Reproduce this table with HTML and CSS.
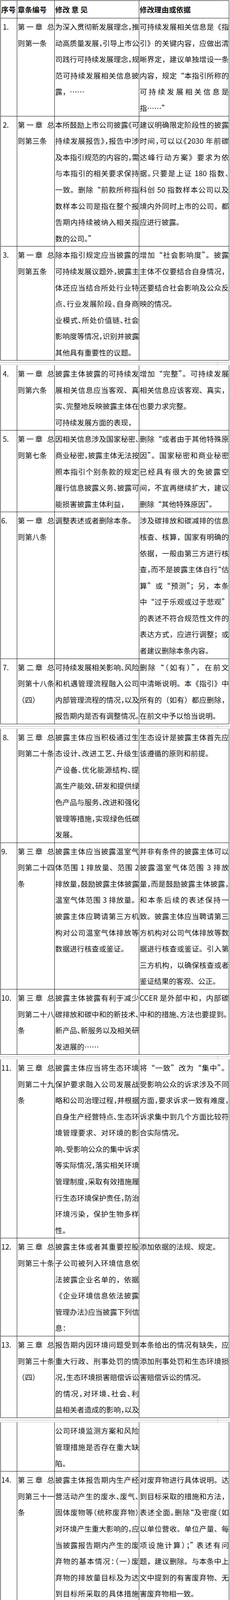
FILE: index.html
```html
<!DOCTYPE html>
<html lang="zh-CN">
<head>
<meta charset="utf-8">
<title>修改意见</title>
<link rel="stylesheet" href="styles.css">
</head>
<body>
<div class="topmark"></div>

<div class="page first">
  <div class="row head">
    <div class="cell c1"><span class="l">序号</span></div>
    <div class="cell c2"><span class="l">章条编号</span></div>
    <div class="cell c3"><span class="l">修改 意 见</span></div>
    <div class="cell c4"><span class="l">修改理由或依据</span></div>
  </div>

  <div class="row">
    <div class="cell c1"><span class="l">1.</span></div>
    <div class="cell c2"><span class="l">第一章 总</span><span class="l">则第一条</span></div>
    <div class="cell c3"><span class="l h">为深入贯彻新发展理念，推</span><span class="l h">动高质量发展，引导上市公</span><span class="l h">司践行可持续发展理念，规</span><span class="l">范可持续发展相关信息披</span><span class="l">露，……</span></div>
    <div class="cell c4"><span class="l">可持续发展相关信息是《指</span><span class="l">引》的关键内容，应做出清</span><span class="l">晰界定，建议单独增设一条</span><span class="l">内容，规定“本指引所称的</span><span class="l">可持续发展相关信息是</span><span class="l">指……”</span></div>
  </div>

  <div class="row">
    <div class="cell c1"><span class="l">2.</span></div>
    <div class="cell c2"><span class="l">第一章 总</span><span class="l">则第三条</span></div>
    <div class="cell c3"><span class="l h">本所鼓励上市公司披露《可</span><span class="l h">持续发展报告》，报告中涉</span><span class="l h">及本指引规范的内容的，需</span><span class="l">与本指引的相关要求保持</span><span class="l">一致。删除“前款所称指</span><span class="l">数样本公司是指在整个报</span><span class="l">告期内持续被纳入相关指</span><span class="l">数的公司。”</span></div>
    <div class="cell c4"><span class="l">建议明确限定阶段性的披露</span><span class="l h">时间，可以以《2030 年前碳</span><span class="l">达峰行动方案》要求为依</span><span class="l h">据。只要是上证 180 指数、</span><span class="l">科创 50 指数样本公司以及</span><span class="l">境内外同时上市的公司，都</span><span class="l">应进行披露。</span></div>
  </div>

  <div class="row">
    <div class="cell c1"><span class="l">3.</span></div>
    <div class="cell c2"><span class="l">第一章 总</span><span class="l">则第五条</span></div>
    <div class="cell c3"><span class="l">除本指引规定应当披露的</span><span class="l h">可持续发展议题外，披露主</span><span class="l">体还应当结合所处行业特</span><span class="l h">点、行业发展阶段、自身商</span><span class="l h">业模式、所处价值链、社会</span><span class="l h">影响度等情况，识别并披露</span><span class="l">其他具有重要性的议题。</span></div>
    <div class="cell c4"><span class="l">增加“社会影响度”。披露</span><span class="l">主体不仅要结合自身情况，</span><span class="l">还要结合社会影响及公众反</span><span class="l">映的情况。</span></div>
  </div>
</div>

<div class="brk"></div>

<div class="page">
  <div class="row">
    <div class="cell c1"><span class="l">4.</span></div>
    <div class="cell c2"><span class="l">第一章 总</span><span class="l">则第六条</span></div>
    <div class="cell c3"><span class="l">披露主体披露的可持续发</span><span class="l">展相关信息应当客观、真</span><span class="l h">实、完整地反映披露主体在</span><span class="l">可持续发展方面的表现，</span></div>
    <div class="cell c4"><span class="l">增加“完整”。可持续发展</span><span class="l">相关信息应该客观、真实，</span><span class="l">也要力求完整。</span></div>
  </div>

  <div class="row">
    <div class="cell c1"><span class="l">5.</span></div>
    <div class="cell c2"><span class="l">第一章 总</span><span class="l">则第七条</span></div>
    <div class="cell c3"><span class="l h">因相关信息涉及国家秘密、</span><span class="l h">商业秘密，披露主体无法按</span><span class="l">照本指引个别条款的规定</span><span class="l h">履行信息披露义务、披露可</span><span class="l">能损害披露主体利益，</span></div>
    <div class="cell c4"><span class="l">删除“或者由于其他特殊原</span><span class="l">因”。国家秘密和商业秘密</span><span class="l">已经具有很大的免披露空</span><span class="l">间，不宜再继续扩大，建议</span><span class="l">删除“其他特殊原因”。</span></div>
  </div>

  <div class="row">
    <div class="cell c1 t"><span class="l">6.</span></div>
    <div class="cell c2"><span class="l">第一章 总</span><span class="l">则第八条</span></div>
    <div class="cell c3"><span class="l">调整表述或者删除本条。</span></div>
    <div class="cell c4"><span class="l">涉及碳排放和碳减排的信息</span><span class="l">核查、核算，国家有明确的</span><span class="l">依据，一般由第三方进行核</span><span class="l h">查，而不是披露主体自行“估</span><span class="l">算”或“预测”；另，本条</span><span class="l">中“过于乐观或过于悲观”</span><span class="l">的表述不符合规范性文件的</span><span class="l">表达方式，应进行调整；或</span><span class="l">者建议删除本条内容。</span></div>
  </div>

  <div class="row">
    <div class="cell c1"><span class="l">7.</span></div>
    <div class="cell c2"><span class="l">第二章 总</span><span class="l">则第十八条</span><span class="l">（四）</span></div>
    <div class="cell c3"><span class="l h">可持续发展相关影响、风险</span><span class="l">和机遇管理流程融入公司</span><span class="l h">内部管理流程的情况，以及</span><span class="l h">报告期内是否有调整情况。</span></div>
    <div class="cell c4"><span class="l">删除“（如有）”，在前文</span><span class="l">中清晰说明。本《指引》中</span><span class="l">所有的（如有）都应删除，</span><span class="l">在前文中予以恰当说明。</span></div>
  </div>
</div>

<div class="brk"></div>

<div class="page">
  <div class="row">
    <div class="cell c1"><span class="l">8.</span></div>
    <div class="cell c2"><span class="l">第三章 总</span><span class="l">则第二十条</span></div>
    <div class="cell c3"><span class="l">披露主体应当积极通过生</span><span class="l h">态设计、改进工艺、升级生</span><span class="l h">产设备、优化能源结构、提</span><span class="l h">高生产能效、研发和提供绿</span><span class="l h">色产品与服务、改进和强化</span><span class="l h">管理等措施，实现绿色低碳</span><span class="l">发展。</span></div>
    <div class="cell c4"><span class="l">生态设计是披露主体首先应</span><span class="l">该遵循的原则和前提。</span></div>
  </div>

  <div class="row">
    <div class="cell c1 t"><span class="l">9.</span></div>
    <div class="cell c2"><span class="l">第三章 总</span><span class="l">则第二十四</span><span class="l">条</span></div>
    <div class="cell c3"><span class="l">披露主体应当披露温室气</span><span class="l">体范围 1 排放量、范围 2</span><span class="l h">排放量，鼓励披露主体披露</span><span class="l">温室气体范围 3 排放量。</span><span class="l">披露主体应聘请第三方机</span><span class="l">构对公司温室气体排放等</span><span class="l">数据进行核查或鉴证。</span></div>
    <div class="cell c4"><span class="l">并非有条件的披露主体可以</span><span class="l">披露温室气体范围 3 排放</span><span class="l h">量，而是鼓励披露主体披露，</span><span class="l">和本条后续的表述保持一</span><span class="l">致。披露主体应当聘请第三</span><span class="l">方机构对公司气体排放等数</span><span class="l">据进行核查或鉴证。引入第</span><span class="l">三方机构，以确保核查或者</span><span class="l">鉴证结果的客观、公正。</span></div>
  </div>

  <div class="row">
    <div class="cell c1 t"><span class="l">10.</span></div>
    <div class="cell c2"><span class="l">第三章 总</span><span class="l">则第二十八</span><span class="l">条</span></div>
    <div class="cell c3"><span class="l">披露主体披露有利于减少</span><span class="l h">碳排放和碳中和的新技术、</span><span class="l h">新产品、新服务以及相关研</span><span class="l">发进展的……</span></div>
    <div class="cell c4"><span class="l">CCER 是外部中和，内部碳</span><span class="l h">中和的措施、方法也要提到。</span></div>
  </div>
</div>

<div class="brk"></div>

<div class="page">
  <div class="row">
    <div class="cell c1 t"><span class="l">11.</span></div>
    <div class="cell c2"><span class="l">第三章 总</span><span class="l">则第二十九</span><span class="l">条</span></div>
    <div class="cell c3"><span class="l">披露主体应当将生态环境</span><span class="l">保护要求融入公司发展战</span><span class="l h">略和公司治理过程，并根据</span><span class="l h">自身生产经营特点、生态环</span><span class="l">境管理要求、对环境的影</span><span class="l h">响、受影响公众的集中诉求</span><span class="l h">等实际情况，落实相关环境</span><span class="l h">管理制度，采取有效措施履</span><span class="l h">行生态环境保护责任，防治</span><span class="l">环境污染，保护生物多样</span><span class="l">性。</span></div>
    <div class="cell c4"><span class="l">将“一致”改为“集中”。</span><span class="l">受影响公众的诉求涉及不同</span><span class="l h">方面，要求诉求一致有难度，</span><span class="l">诉求集中到几个方面比较符</span><span class="l">合实际情况。</span></div>
  </div>

  <div class="row">
    <div class="cell c1 t"><span class="l">12.</span></div>
    <div class="cell c2"><span class="l">第三章 总</span><span class="l">则第三十条</span></div>
    <div class="cell c3"><span class="l">披露主体或者其重要控股</span><span class="l">子公司被列入环境信息依</span><span class="l">法披露企业名单的，依据</span><span class="l">《企业环境信息依法披露</span><span class="l h">管理办法》应当披露下列信</span><span class="l">息：</span></div>
    <div class="cell c4"><span class="l">添加依据的法规、规定。</span></div>
  </div>

  <div class="row">
    <div class="cell c1 t"><span class="l">13.</span></div>
    <div class="cell c2"><span class="l">第三章 总</span><span class="l">则第三十条</span><span class="l">（四）</span></div>
    <div class="cell c3"><span class="l">报告期内因环境问题受到</span><span class="l">重大行政、刑事处罚的情</span><span class="l h">况，生态环境损害赔偿诉讼</span><span class="l h">的情况，对环境、社会、利</span><span class="l h j">益相关者造成的影响，以及</span></div>
    <div class="cell c4"><span class="l">本条给出的情况有缺失，应</span><span class="l">添加刑事处罚和生态环境损</span><span class="l">害赔偿诉讼的情况。</span></div>
  </div>
</div>

<div class="brk"></div>

<div class="page">
  <div class="row">
    <div class="cell c1"></div>
    <div class="cell c2"></div>
    <div class="cell c3"><span class="l">公司环境监测方案和风险</span><span class="l">管理措施是否存在重大缺</span><span class="l">陷。</span></div>
    <div class="cell c4"></div>
  </div>

  <div class="row">
    <div class="cell c1 t"><span class="l">14.</span></div>
    <div class="cell c2"><span class="l">第三章 总</span><span class="l">则第三十一</span><span class="l">条</span></div>
    <div class="cell c3"><span class="l">披露主体报告期内生产经</span><span class="l h">营活动产生的废水、废气、</span><span class="l h">固体废物等（统称废弃物）</span><span class="l h">对环境产生重大影响的，应</span><span class="l">当披露报告期内产生的废</span><span class="l h">弃物的基本情况：（一）废</span><span class="l">弃物的排放量目标及为达</span><span class="l">到目标所采取的具体措施</span><span class="l">或方法；（二）产生的危</span><span class="l h">险废物等有害废弃物、无害</span><span class="l">废弃物的总量（以吨计</span><span class="l">算）；（三）危险废物等</span><span class="l h">有害废弃物、无害废弃物的</span><span class="l">处理方法、处置情况。</span></div>
    <div class="cell c4"><span class="l">对废弃物进行具体说明。达</span><span class="l">到目标采取的措施和方法，</span><span class="l h">表述全面。删除“及密度（如</span><span class="l">以单位营收、单位产量、每</span><span class="l h">项设施计算）；” 表述有问</span><span class="l">题，建议删除。与本条中上</span><span class="l">文中提到的有害废弃物、无</span><span class="l">害废弃物相一致。</span></div>
  </div>

  <div class="row">
    <div class="cell c1 t"><span class="l">15.</span></div>
    <div class="cell c2"><span class="l">第三章 总</span><span class="l">则第三十二</span><span class="l">条</span></div>
    <div class="cell c3"><span class="l">披露主体报告期内生活或</span><span class="l">生产经营活动对生态系统</span><span class="l">和生物多样性产生重大影</span><span class="l">响的，应当披露下列内</span><span class="l j">容：（二）在生活或生产</span></div>
    <div class="cell c4"><span class="l">披露不仅要包含生产经营活</span><span class="l">动，还有生活活动；包含生</span><span class="l">产经营场所周边，也包括生</span><span class="l">活场所。</span></div>
  </div>
</div>

<div class="brk"></div>

<div class="page">
  <div class="row pad">
    <div class="cell c1"></div>
    <div class="cell c2"></div>
    <div class="cell c3"><span class="l h">经营场所周边，以及陆地、</span><span class="l h">海洋重点生态功能区、生态</span><span class="l">保护红线、自然保护地，</span></div>
    <div class="cell c4"></div>
  </div>

  <div class="row">
    <div class="cell c1 t"><span class="l">16.</span></div>
    <div class="cell c2"><span class="l">第三章 总</span><span class="l">则第三十三</span><span class="l">条</span></div>
    <div class="cell c3"><span class="l h">（三）报告期内因重大环境</span><span class="l">事件受到生态环境等有关</span><span class="l">部门行政处罚或被追究刑</span><span class="l h">事责任的情况，生态环境损</span><span class="l">害赔偿诉讼的情况，……</span></div>
    <div class="cell c4"><span class="l">包含的情况不完整，应予以</span><span class="l">添加。</span></div>
  </div>

  <div class="row">
    <div class="cell c1 t"><span class="l">17.</span></div>
    <div class="cell c2"><span class="l">第三章 总</span><span class="l">则第三十四</span><span class="l">条</span></div>
    <div class="cell c3"><span class="l">第三十四条 披露主体应当</span><span class="l h">集约、高效利用能源、水、</span><span class="l h">原材料等资源，加强资源使</span><span class="l">用过程节约管理，推动生</span><span class="l h">产、流通过程的减量化、再</span><span class="l">利用、再循环。</span></div>
    <div class="cell c4"><span class="l">增加“集约”，不仅要“高</span><span class="l">效”利用，还要集中合理地</span><span class="l">利用。</span></div>
  </div>

  <div class="row">
    <div class="cell c1 t"><span class="l">18.</span></div>
    <div class="cell c2"><span class="l">第三章 总</span><span class="l">则第三十五</span><span class="l">条</span></div>
    <div class="cell c3"><span class="l h">（二）为实现循环经济而实</span><span class="l h">施的具体措施，包括节省资</span><span class="l h">源、提高资源利用率、使用</span><span class="l h">可再生资源、预防和减少废</span><span class="l">弃物的产生以及回收利用</span><span class="l h">废弃物等；（三）在实现循</span><span class="l j">环经济目标方面取得的具</span></div>
    <div class="cell c4"><span class="l ind">本条开始已经提到报告期</span><span class="l">内，在后续的小分项中可以</span><span class="l h">省略。 “可再生资源耗量”</span><span class="l">建议改为“可再生资源使用</span><span class="l">量”。 建议增加一条创新</span><span class="l">研究及创新技术使用的情</span><span class="l">况。</span></div>
  </div>
</div>

<div class="brk"></div>

<div class="page">
  <div class="row">
    <div class="cell c1"></div>
    <div class="cell c2"></div>
    <div class="cell c3"><span class="l h">体进展及成效，包括废弃物</span><span class="l h">的回收及综合利用情况（含</span><span class="l h">废弃物循环利用量）、可再</span><span class="l">生资源使用量及占相应资</span><span class="l">源总消耗量的比例</span><span class="l">等。（四）为推进循环经</span><span class="l">济开展的创新研究及创新</span><span class="l">技术使用等方面的情况。</span></div>
    <div class="cell c4"></div>
  </div>

  <div class="row">
    <div class="cell c1 t"><span class="l">19.</span></div>
    <div class="cell c2"><span class="l">第三章 总</span><span class="l">则第三十七</span><span class="l">条</span></div>
    <div class="cell c3"><span class="l">增加一条对大气污染物排</span><span class="l">放的要求。</span></div>
    <div class="cell c4"><span class="l">建议在三十七条后面，对大</span><span class="l">气污染物排放应单独做一个</span><span class="l">公开要求。国家有大气污染</span><span class="l">防治法，全国都重视大气污</span><span class="l">染防治工作，因此，应增加</span><span class="l">一条对大气污染物排放的要</span><span class="l">求。</span></div>
  </div>

  <div class="row">
    <div class="cell c1 t"><span class="l">20.</span></div>
    <div class="cell c2"><span class="l">第四章第四</span><span class="l">十五条</span></div>
    <div class="cell c3"><span class="l h">应付账款（含应付票据）超</span><span class="l">过 300 亿元或占总资产的</span><span class="l">比重超过 50%的，应当披</span><span class="l">露报告期末逾期未支付的</span><span class="l h">金额，以及拟采取的解决方</span><span class="l">案。</span></div>
    <div class="cell c4"><span class="l">删除“余额”。有不同的理</span><span class="l">解，容易引起歧义，建议删</span><span class="l">除。</span></div>
  </div>
</div>
</body>
</html>
```
FILE: styles.css
```css
* {
  box-sizing: border-box;
}

html,
body {
  margin: 0;
  padding: 0;
  background: #ffffff;
}

body {
  width: 588px;
  padding-top: 1px;
  position: relative;
  overflow-x: hidden;
  font-family: "Noto Sans CJK SC", sans-serif;
  font-size: 18.67px;
  color: #111111;
}

.topmark {
  position: absolute;
  left: 556px;
  top: 0;
  width: 1px;
  height: 3px;
  background: #bbbbbb;
}

.page {
  margin-left: 1px;
  width: 585px;
  border-left: 1px solid #111111;
  overflow: hidden;
}

.page.first {
  border-top: 1px solid #111111;
}

.row {
  display: grid;
  grid-template-columns: 42px 96px 216px 230px;
  border-bottom: 1px solid #111111;
}

.cell {
  border-right: 1px solid #111111;
  padding-left: 1px;
  line-height: 41.6px;
  min-width: 0;
}

.l {
  display: block;
  height: 41.6px;
  line-height: 41.6px;
  white-space: nowrap;
  text-align: justify;
  text-align-last: justify;
}

.l:last-child {
  text-align-last: auto;
}

.l.j:last-child {
  text-align-last: justify;
}

.row.head .l {
  height: 44px;
  line-height: 44px;
  font-weight: 700;
}

.row.pad .cell {
  padding-bottom: 10px;
}

.c1 {
  padding-left: 5px;
}

.c1.t,
.row.head .c1 {
  padding-left: 1px;
}

.h {
  font-feature-settings: "halt";
}

.ind {
  padding-left: 6px;
}

.brk {
  position: relative;
  height: 11.5px;
  padding-top: 5px;
}

.brk::before {
  content: "";
  display: block;
  height: 4px;
  border-top: 1px solid #a8a8a8;
  border-bottom: 1px solid #c4c4c4;
}

.brk::after {
  content: "";
  position: absolute;
  left: 556px;
  top: 2px;
  width: 1px;
  height: 10px;
  background: #bbbbbb;
}
```
